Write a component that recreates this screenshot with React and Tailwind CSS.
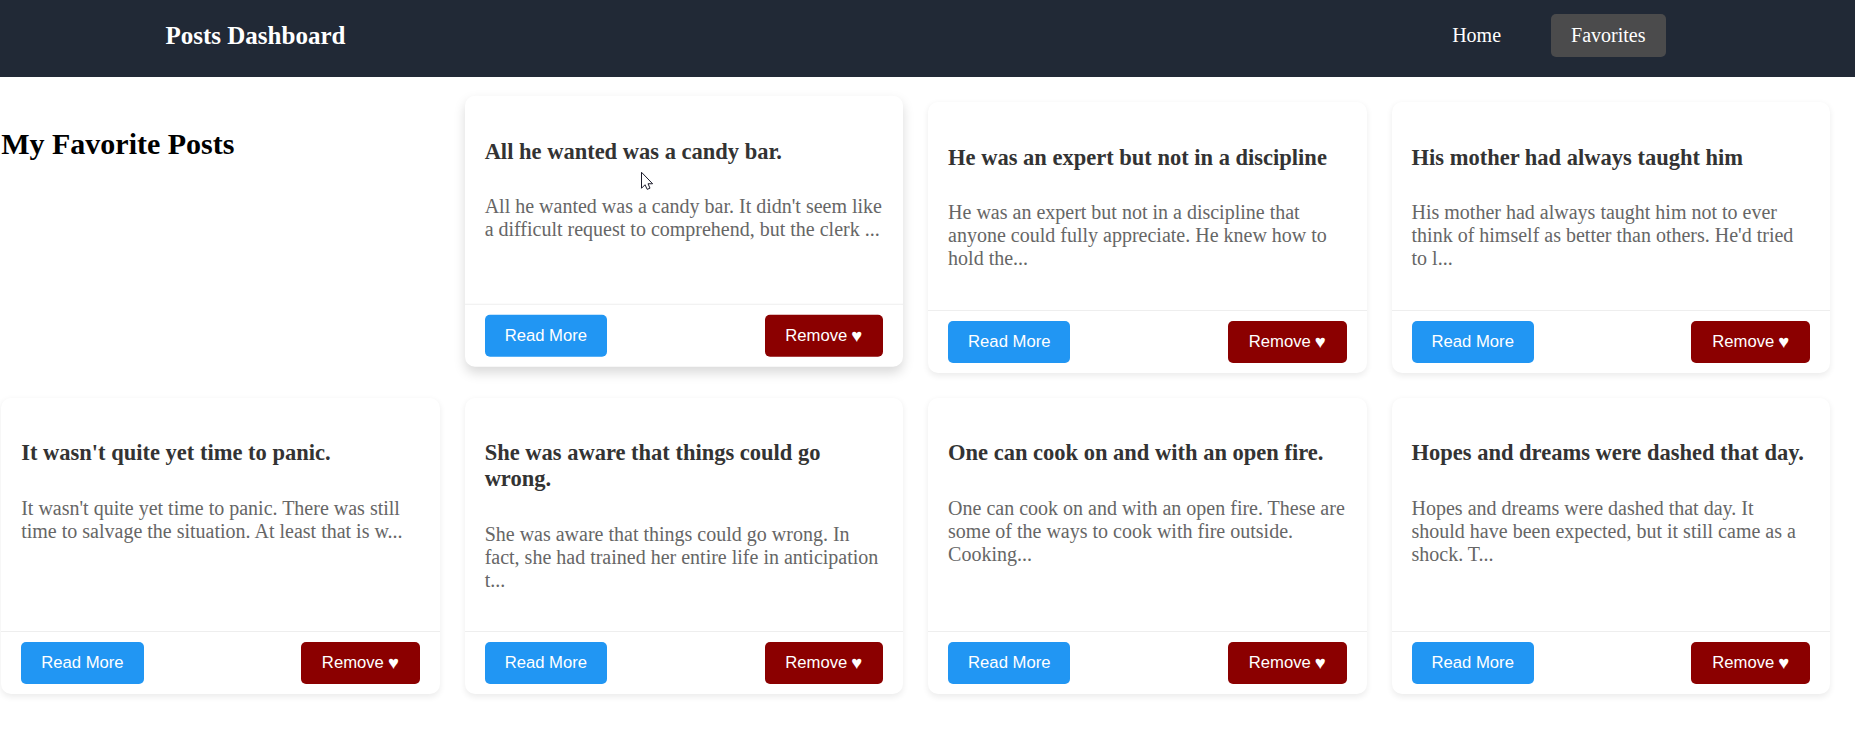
import React from "react";

const posts = [
  {
    title: "All he wanted was a candy bar.",
    body: "All he wanted was a candy bar. It didn't seem like a difficult request to comprehend, but the clerk ...",
    active: true,
  },
  {
    title: "He was an expert but not in a discipline",
    body: "He was an expert but not in a discipline that anyone could fully appreciate. He knew how to hold the...",
  },
  {
    title: "His mother had always taught him",
    body: "His mother had always taught him not to ever think of himself as better than others. He'd tried to l...",
  },
  {
    title: "It wasn't quite yet time to panic.",
    body: "It wasn't quite yet time to panic. There was still time to salvage the situation. At least that is w...",
  },
  {
    title: "She was aware that things could go wrong.",
    body: "She was aware that things could go wrong. In fact, she had trained her entire life in anticipation t...",
  },
  {
    title: "One can cook on and with an open fire.",
    body: "One can cook on and with an open fire. These are some of the ways to cook with fire outside. Cooking...",
  },
  {
    title: "Hopes and dreams were dashed that day.",
    body: "Hopes and dreams were dashed that day. It should have been expected, but it still came as a shock. T...",
  },
];

function Navbar() {
  return (
    <nav className="h-[77px] bg-[#212936] text-white">
      <div className="ml-[165.5px] flex w-[1500px] items-start justify-between pt-[14px]">
        <h1 className="mt-[7px] text-[25px] leading-[29px] font-bold">Posts Dashboard</h1>
        <div className="flex gap-[30px] text-[20px] leading-[23px]">
          <a className="rounded-[5px] px-5 py-[10px]">Home</a>
          <a className="rounded-[5px] bg-[#4b4b4c] px-5 py-[10px]">Favorites</a>
        </div>
      </div>
    </nav>
  );
}

function Pointer() {
  return (
    <svg
      className="absolute top-[75px] left-[175px] h-[20px] w-[14px]"
      viewBox="0 0 14 20"
      fill="none"
    >
      <path
        d="M1.5 1.5V17.5L5 14L7.2 18.6L10 17.4L8 13H12.6Z"
        fill="#fff"
        stroke="#1b1b2b"
        strokeWidth="1"
      />
    </svg>
  );
}

function PostCard({ post }) {
  return (
    <article
      className={
        post.active
          ? "relative flex -translate-y-[6.25px] flex-col rounded-[10px] bg-white shadow-[0_6px_12px_rgba(0,0,0,0.15)]"
          : "flex flex-col rounded-[10px] bg-white shadow-[0_2.5px_6px_rgba(0,0,0,0.08)]"
      }
    >
      <div className="grow px-5 pt-[42.5px] pb-[30px]">
        <h3 className="text-[22.5px] leading-[26px] font-bold text-[#333]">{post.title}</h3>
        <p className="mt-[30.8px] text-[20px] leading-[23px] text-[#666]">{post.body}</p>
      </div>
      <div className="flex justify-between border-t border-[#eee] px-5 py-[10px] font-['Liberation_Sans',Arial,sans-serif] text-[16.67px] leading-[20px] text-white">
        <button className="h-[42px] rounded-[5px] bg-[#2196f3] px-5">Read More</button>
        <button className="flex h-[42px] w-[118.5px] items-center justify-center gap-[4px] rounded-[5px] bg-[#8b0000]">
          <span>Remove</span>
          <span className="text-[18.5px]">♥</span>
        </button>
      </div>
      {post.active && <Pointer />}
    </article>
  );
}

export default function App() {
  return (
    <div className="min-h-[737px] bg-white font-['Liberation_Serif','Times_New_Roman',serif]">
      <Navbar />
      <main className="mt-[25px] ml-[1.2px] grid w-[1828.8px] grid-cols-4 grid-rows-[270.75px_295.75px] gap-[25px]">
        <h2 className="mt-[25px] text-[30px] leading-[34px] font-bold text-black">My Favorite Posts</h2>
        {posts.map((post) => (
          <PostCard key={post.title} post={post} />
        ))}
      </main>
    </div>
  );
}
